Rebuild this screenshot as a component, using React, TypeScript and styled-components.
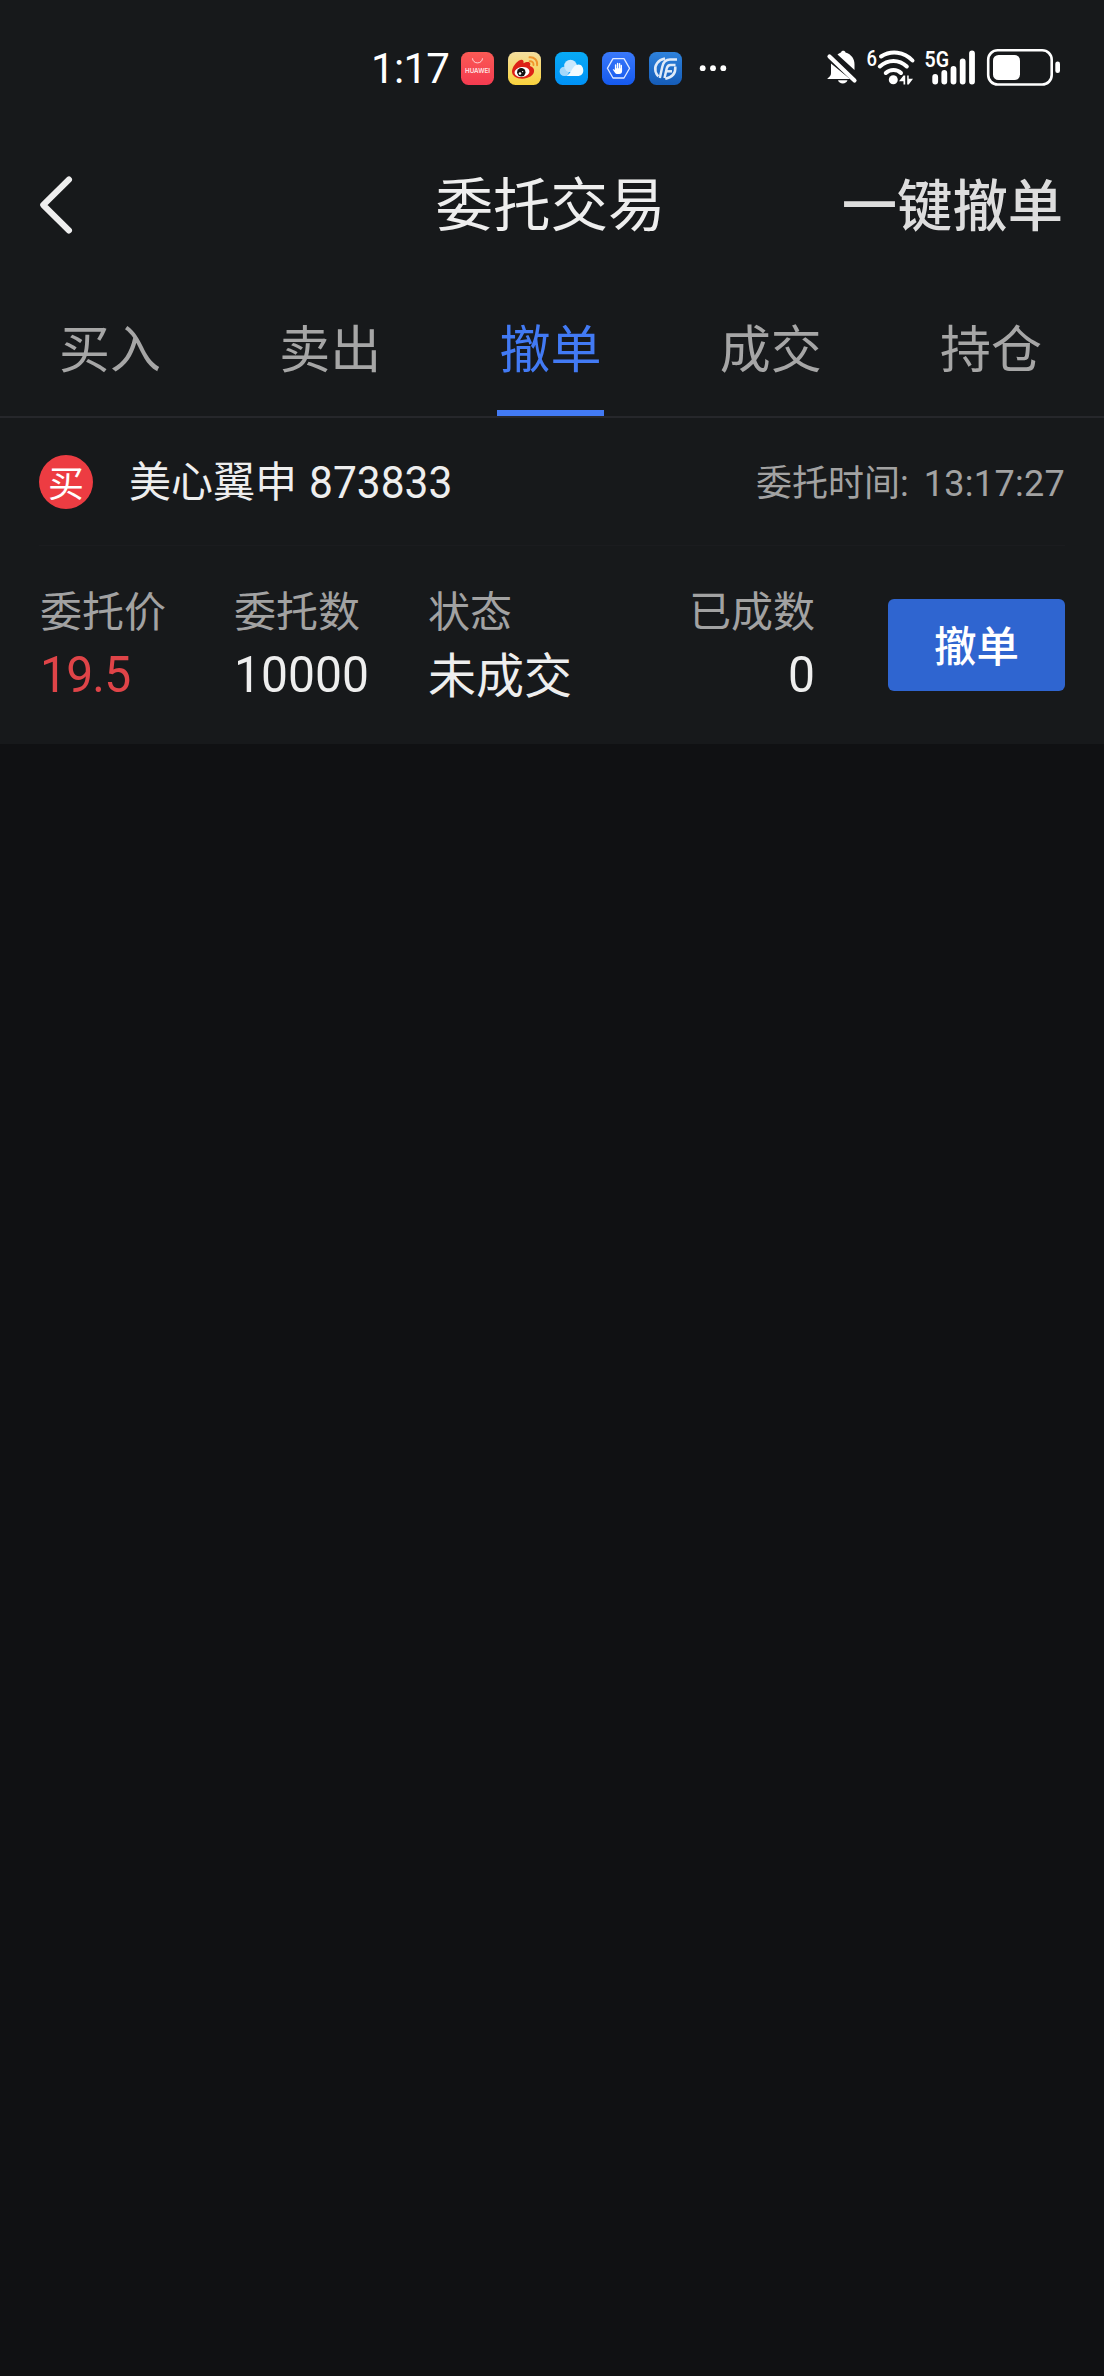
import React from 'react';
import styled, { createGlobalStyle } from 'styled-components';

const Global = createGlobalStyle`
  * { box-sizing: border-box; }
  html, body { margin: 0; padding: 0; background: #101113; }
  body { font-family: "Noto Sans CJK SC", sans-serif; }
`;

const Screen = styled.div`
  width: 1104px;
  min-height: 2376px;
  background: #101113;
  overflow: hidden;
`;

const Panel = styled.div`
  height: 744px;
  background: #17191b;
`;

const StatusBar = styled.div`
  height: 136px;
  padding: 1px 43px 0 371px;
  display: flex;
  align-items: center;
`;

const Clock = styled.span`
  width: 90px;
  color: #fff;
  font: 400 42px/44px Roboto, sans-serif;
  letter-spacing: -0.7px;
  white-space: nowrap;
`;

const AppIcons = styled.div`
  display: flex;
  gap: 14px;
`;

const Indicators = styled.div`
  margin-left: auto;
  display: flex;
  align-items: center;
`;

const NavBar = styled.header`
  height: 131px;
  padding: 0 41px 0 38px;
  display: grid;
  grid-template-columns: 1fr auto 1fr;
  align-items: center;
`;

const Txt = styled.span<{ $size: number; $color: string; $weight?: number }>`
  display: block;
  font-size: ${(p) => p.$size}px;
  line-height: ${(p) => Math.round(p.$size * 1.2)}px;
  color: ${(p) => p.$color};
  font-weight: ${(p) => p.$weight ?? 400};
  white-space: nowrap;
`;

const NavAction = styled(Txt)`
  justify-self: end;
`;

const Tabs = styled.nav`
  height: 151px;
  padding-right: 3px;
  display: grid;
  grid-template-columns: repeat(5, 1fr);
  border-bottom: 2px solid #26272b;
`;

const Tab = styled.div<{ $active?: boolean }>`
  display: flex;
  flex-direction: column;
  align-items: center;
  padding-top: 49px;
  &::after {
    content: "";
    margin-top: auto;
    width: 107px;
    height: 6px;
    background: ${(p) => (p.$active ? '#427af4' : 'transparent')};
  }
`;

const OrderHead = styled.div`
  height: 128px;
  margin: 0 39px;
  display: flex;
  align-items: center;
  border-bottom: 1px solid #1b1c1f;
`;

const Badge = styled.div`
  width: 54px;
  height: 54px;
  margin-right: 36px;
  border-radius: 50%;
  background: #ed3c42;
  display: flex;
  align-items: center;
  justify-content: center;
`;

const Digits = styled.span<{ $size: number; $color?: string; $spacing?: number; $drop?: number }>`
  display: block;
  margin-top: ${(p) => p.$drop ?? 7}px;
  font-family: Roboto, sans-serif;
  font-size: ${(p) => p.$size}px;
  letter-spacing: ${(p) => p.$spacing ?? 0}px;
  line-height: 48px;
  color: ${(p) => p.$color ?? 'inherit'};
  white-space: pre;
  transform: scaleY(1.05);
`;

const OrderName = styled.div`
  display: flex;
  align-items: center;
  gap: 12px;
  color: #eeeeee;
  margin-bottom: 5px;
`;

const OrderTime = styled.div`
  display: flex;
  align-items: center;
  margin-left: auto;
  margin-bottom: 2px;
  color: #a2a2a2;
`;

const Colon = styled(Digits)`
  margin-right: 15px;
`;

const OrderBody = styled.div`
  padding: 38px 39px 0 40px;
  display: grid;
  grid-template-columns: 194px 194px 204px 183px 1fr;
`;

const Cell = styled.div<{ $end?: boolean }>`
  display: flex;
  flex-direction: column;
  align-items: ${(p) => (p.$end ? 'flex-end' : 'flex-start')};
  gap: 9px;
`;

const Value = styled.div`
  height: 57px;
  display: flex;
  align-items: center;
`;

const CancelButton = styled.button`
  justify-self: end;
  width: 177px;
  height: 92px;
  margin-top: 15px;
  padding: 0 0 3px;
  border: 0;
  border-radius: 6px;
  background: #2f65d0;
  display: flex;
  align-items: center;
  justify-content: center;
  font-family: inherit;
`;

const HuaweiIcon = () => (
  <svg width="33" height="33" viewBox="0 0 33 33">
    <defs>
      <linearGradient id="hw" x1="0" y1="0" x2="0" y2="1">
        <stop offset="0" stopColor="#fb5a55" />
        <stop offset="1" stopColor="#f43b50" />
      </linearGradient>
    </defs>
    <rect width="33" height="33" rx="7.5" fill="url(#hw)" />
    <path d="M11.500 6.300a5 4.600 0 0 0 10 0" fill="none" stroke="#fff" strokeOpacity=".75" strokeWidth="1" />
    <text x="16.5" y="21" textAnchor="middle" textLength="25" lengthAdjust="spacingAndGlyphs" fontFamily="Inter, sans-serif" fontWeight="600" fontSize="6.4" fill="#ffe6e6">HUAWEI</text>
  </svg>
);

const WeiboIcon = () => (
  <svg width="33" height="33" viewBox="0 0 33 33">
    <defs>
      <linearGradient id="wb" x1="0" y1="0" x2="0" y2="1">
        <stop offset="0" stopColor="#f4dfa0" />
        <stop offset="1" stopColor="#fad23c" />
      </linearGradient>
    </defs>
    <rect width="33" height="33" rx="7.5" fill="url(#wb)" />
    <path d="M12.500 8c2.500-.6 3.500 1 3 3.200 2.500-1.400 6.500-2 6.800.6.1 1-.3 1.700-.4 2.300 2.500.8 4.200 2.200 4.200 4.700 0 4.500-5.700 7.900-11.800 7.900S4 23.700 4 19.500C4 15.500 8.600 9 12.500 8z" fill="#dd2117" />
    <ellipse cx="14" cy="20" rx="7.5" ry="5" fill="#fff" transform="rotate(-7 14 20)" />
    <circle cx="13.300" cy="20.300" r="4.200" fill="#111" />
    <circle cx="12" cy="21.500" r="1.300" fill="#fff" />
    <circle cx="14.600" cy="19.600" r=".7" fill="#fff" />
    <path d="M21.500 5.300c4.800-.5 8.300 3 7.600 8M21.700 9.300c2.500-.2 4 1.300 3.800 3.700" fill="none" stroke="#f0952c" strokeWidth="1.900" strokeLinecap="round" />
  </svg>
);

const CloudIcon = () => (
  <svg width="33" height="33" viewBox="0 0 33 33">
    <defs>
      <linearGradient id="cl" x1="0" y1="0" x2="0" y2="1">
        <stop offset="0" stopColor="#08aaf5" />
        <stop offset="1" stopColor="#0092f7" />
      </linearGradient>
    </defs>
    <rect width="33" height="33" rx="7.5" fill="url(#cl)" />
    <circle cx="9.300" cy="19.400" r="4.700" fill="#a4d8fb" />
    <circle cx="15.500" cy="14" r="6.300" fill="#c9e8fd" />
    <path d="M10 24c3-.4 4.500-2.300 6.500-5.500 1.800-3.200 3.600-6 7.200-6 2.900 0 4.600 3 4.600 6 0 3.300-2.300 5.500-5.500 5.500z" fill="#f3fafe" />
  </svg>
);

const HandIcon = () => (
  <svg width="33" height="33" viewBox="0 0 33 33">
    <defs>
      <linearGradient id="hd" x1="0" y1="0" x2="0" y2="1">
        <stop offset="0" stopColor="#3a79fa" />
        <stop offset="1" stopColor="#1559ee" />
      </linearGradient>
    </defs>
    <rect width="33" height="33" rx="7.5" fill="url(#hd)" />
    <path d="M11 6.700h11l5.600 9.600L22 26H11l-5.600-9.700z" fill="none" stroke="#dfe9ff" strokeWidth="1.300" strokeLinejoin="round" />
    <path d="M13.600 17v-4M15.600 16.500v-5M17.600 16.500v-4.700M19.300 17v-3.500" stroke="#fff" strokeWidth="1.400" strokeLinecap="round" />
    <path d="M12.900 16.300h7.200v2.800a3 3 0 0 1-3 3h-1.300c-1.500 0-2.300-.7-3-1.700l-2.100-2.800c.8-.6 1.500-.3 2.200.5z" fill="#fff" />
  </svg>
);

const BrokerIcon = () => (
  <svg width="33" height="33" viewBox="0 0 33 33">
    <defs>
      <linearGradient id="bk" x1="0" y1="0" x2="0" y2="1">
        <stop offset="0" stopColor="#2e82dc" />
        <stop offset="1" stopColor="#155cb8" />
      </linearGradient>
    </defs>
    <rect width="33" height="33" rx="7.5" fill="url(#bk)" />
    <g fill="none" stroke="#dfeaf8" strokeWidth="2.500">
      <path d="M16 6.600C9 7.800 5 13.500 6.500 19.500c.5 2 1.500 3.500 2.800 4.800" />
      <path d="M28 7.500h-7c-5 0-6.700 2.700-7.700 7.200L10.800 26" />
      <path d="M26.500 13H21.500c-2.500 0-3.300 1.500-3.800 3.500L15.500 26" />
      <path d="M17 19.300h6" />
      <path d="M26.300 14.500c.5 6.200-3 10.800-10 12.300" />
    </g>
  </svg>
);

const MoreDots = () => (
  <svg width="32" height="33" viewBox="0 0 32 33">
    <circle cx="6.700" cy="16.200" r="2.900" fill="#fff" />
    <circle cx="17" cy="16.200" r="2.900" fill="#fff" />
    <circle cx="27.300" cy="16.200" r="2.900" fill="#fff" />
  </svg>
);

/* Muted bell, Wi-Fi 6, 5G bars and battery share one strip. */
const SystemIcons = () => (
  <svg width="251" height="51" viewBox="810 43 251 51">
    <g fill="#fff">
      <path d="M831 63.500v9.500c0 2-.8 3.300-3.500 5.500V79h22.500z" />
      <path d="M837.500 54.500c1.500-1.200 2.500-1.600 3.500-2 .3-2.500 4.200-2.500 4.500 0 6 1.800 9 6.500 9 12V70z" />
      <path d="M838 80.300h9.500a5 4.600 0 0 1-9.500 0z" />
    </g>
    <path d="M829.500 56.500L854.500 80.500" stroke="#fff" strokeWidth="4.200" strokeLinecap="round" />
    <text x="866.500" y="65.5" fontFamily="Roboto, sans-serif" fontWeight="500" fontSize="22" fill="#fff" textLength="10.500" lengthAdjust="spacingAndGlyphs">6</text>
    <g fill="none" stroke="#fff" strokeWidth="4" strokeLinecap="round">
      <path d="M881 56.500C891 50 904 51.500 912.500 60.500" />
      <path d="M879.800 66.500C888 59 899 59 906.800 66.500" />
      <path d="M885.800 73C890 69 897 69 901 73" />
    </g>
    <circle cx="893.300" cy="79.800" r="4.500" fill="#fff" />
    <path d="M899 81.300l4.500-5.800h1.700v9h-1.700v-3.200zM913 78.700l-4.300 5.800h-1.500v-9h1.500v3.200z" fill="#fff" />
    <text x="924.500" y="67.3" fontFamily="Roboto, sans-serif" fontWeight="600" fontSize="22.500" fill="#fff" textLength="24.500" lengthAdjust="spacingAndGlyphs">5G</text>
    <g stroke="#fff" strokeWidth="5.800" strokeLinecap="round">
      <path d="M935.200 77v4.500M944.300 73v8.500M953.500 69v12.500M962.700 61.500v20M972 53.500v28" />
    </g>
    <rect x="988.200" y="50.200" width="63.500" height="34.300" rx="9.500" fill="none" stroke="#fff" strokeWidth="2.600" />
    <rect x="993" y="55" width="27" height="25" rx="5.500" fill="#fff" />
    <rect x="1055.300" y="61.500" width="4.700" height="11.500" rx="2.300" fill="#fff" />
  </svg>
);

const BackArrow = styled.svg`
  margin-top: 6px;
`;

const BackIcon = () => (
  <BackArrow width="40" height="62" viewBox="0 0 40 62">
    <path d="M31 5.500L5.200 31L31 56.500" fill="none" stroke="#eee" strokeWidth="6" strokeLinecap="round" strokeLinejoin="round" />
  </BackArrow>
);

const tabs = ['买入', '卖出', '撤单', '成交', '持仓'];

export default function App() {
  return (
    <Screen>
      <Global />
      <Panel>
        <StatusBar>
          <Clock>1:17</Clock>
          <AppIcons>
            <HuaweiIcon />
            <WeiboIcon />
            <CloudIcon />
            <HandIcon />
            <BrokerIcon />
            <MoreDots />
          </AppIcons>
          <Indicators>
            <SystemIcons />
          </Indicators>
        </StatusBar>
        <NavBar>
          <BackIcon />
          <Txt $size={57.5} $color="#eeeeee">委托交易</Txt>
          <NavAction $size={55.3} $color="#dddddd" $weight={500}>一键撤单</NavAction>
        </NavBar>
        <Tabs>
          {tabs.map((t) => (
            <Tab key={t} $active={t === '撤单'}>
              <Txt $size={51} $color={t === '撤单' ? '#427af4' : '#a6a6a6'}>{t}</Txt>
            </Tab>
          ))}
        </Tabs>
        <OrderHead>
          <Badge>
            <Txt $size={36} $color="#ffffff">买</Txt>
          </Badge>
          <OrderName>
            <Txt $size={42} $color="#eeeeee">美心翼申</Txt>
            <Digits $size={42.5}>873833</Digits>
          </OrderName>
          <OrderTime>
            <Txt $size={36} $color="#a2a2a2">委托时间</Txt>
            <Colon $size={36} $drop={5}>:</Colon>
            <Digits $size={36} $drop={5} $spacing={0.3}>13:17:27</Digits>
          </OrderTime>
        </OrderHead>
        <OrderBody>
          <Cell>
            <Txt $size={42} $color="#a2a2a2">委托价</Txt>
            <Value><Digits $size={48} $color="#df4448" $spacing={-0.8}>19.5</Digits></Value>
          </Cell>
          <Cell>
            <Txt $size={42} $color="#a2a2a2">委托数</Txt>
            <Value><Digits $size={48} $color="#eeeeee">10000</Digits></Value>
          </Cell>
          <Cell>
            <Txt $size={42} $color="#a2a2a2">状态</Txt>
            <Value><Txt $size={48} $color="#eeeeee">未成交</Txt></Value>
          </Cell>
          <Cell $end>
            <Txt $size={42} $color="#a2a2a2">已成数</Txt>
            <Value><Digits $size={48} $color="#eeeeee">0</Digits></Value>
          </Cell>
          <CancelButton>
            <Txt $size={42.5} $color="#ffffff" $weight={500}>撤单</Txt>
          </CancelButton>
        </OrderBody>
      </Panel>
    </Screen>
  );
}
